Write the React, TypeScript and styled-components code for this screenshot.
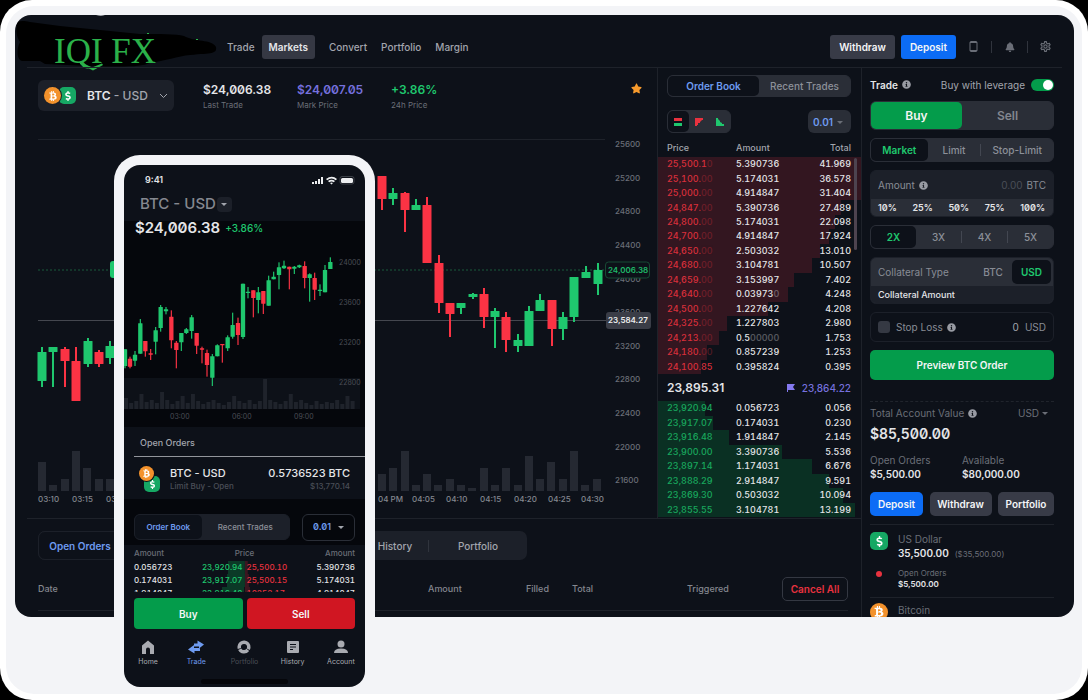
import React from "react";
import styled, { createGlobalStyle } from "styled-components";
import { FaBtc, FaInfoCircle, FaBell, FaStar, FaDollarSign } from "react-icons/fa";
import { MdOutlineSettings } from "react-icons/md";

const c = {
  screen: "#0d1119",
  deep: "#05070c",
  card: "#1c2029",
  raised: "#2a2e37",
  line: "#1e222a",
  text: "#e4e5e8",
  soft: "#a2a5ad",
  mute: "#6a6e77",
  dim: "#4a4e57",
  green: "#1fc76e",
  greenFill: "#049c4b",
  red: "#e8323f",
  candleRed: "#fb3344",
  blue: "#6e9bf0",
  blueFill: "#0c6cf5",
  purple: "#7570dd",
  tray: "#f3f4f7",
};

const Global = createGlobalStyle`
  *, *::before, *::after { box-sizing: border-box; }
  body {
    margin: 0;
    background: #000;
    color: ${c.text};
    font-family: Inter, "Liberation Sans", sans-serif;
    font-size: 10px;
    line-height: 14px;
  }
  button, input, select { font: inherit; color: inherit; margin: 0; }
  button { border: 0; padding: 0; background: none; cursor: pointer; }
  a { color: inherit; text-decoration: none; }
  svg { display: block; flex: none; }
  table { border-collapse: collapse; border-spacing: 0; width: 100%; }
  th, td { padding: 0; text-align: left; font-weight: 500; }
`;

/* ---------- frame ---------- */

const Frame = styled.div`
  height: 100vh;
  min-height: 640px;
  padding: 6px;
  background: #fff;
  border-radius: 32px;
`;

const Tray = styled.div`
  position: relative;
  display: flex;
  height: 100%;
  padding: 9px 8px 77px 9px;
  background: ${c.tray};
  border-radius: 28px;
`;

const Screen = styled.div`
  flex: 1;
  min-width: 0;
  display: flex;
  flex-direction: column;
  overflow: hidden;
  background: ${c.screen};
  border-radius: 16px;
`;

/* ---------- header ---------- */

const Header = styled.header`
  display: flex;
  align-items: center;
  height: 52px;
  padding: 0 23px 0 1px;
`;

const Rule = styled.div<{ $r?: number }>`
  flex: none;
  height: 1px;
  margin: 0 ${(p) => p.$r ?? 12}px 0 12px;
  background: ${c.line};
`;

const Nav = styled.nav`
  display: flex;
  margin: 11px auto 0 4px;
`;

const NavLink = styled.a<{ $on?: boolean }>`
  display: flex;
  align-items: center;
  height: 24px;
  margin-right: ${(p) => (p.$on ? 7 : 0)}px;
  padding: 0 7px;
  border-radius: 3px;
  font-weight: ${(p) => (p.$on ? 600 : 500)};
  color: ${(p) => (p.$on ? c.text : c.soft)};
  background: ${(p) => (p.$on ? "#353843" : "transparent")};
`;

const Actions = styled.div`
  display: flex;
  align-items: center;
  gap: 6px;
  margin-top: 11px;
`;

const Button = styled.button<{ $tone?: "blue" | "green" | "red"; $h?: number; $r?: number }>`
  height: ${(p) => p.$h ?? 24}px;
  padding: 0 9px;
  border-radius: ${(p) => p.$r ?? 3}px;
  font-weight: 600;
  color: #f4f5f6;
  background: ${(p) =>
    p.$tone === "blue" ? c.blueFill : p.$tone === "green" ? c.greenFill : p.$tone === "red" ? "#d01622" : "#383b47"};
`;

const Tools = styled.div`
  display: grid;
  grid-template-columns: 35px 1px 35px 1px 35px;
  align-items: center;
  margin: 0 -12px 0 -6px;
  color: ${c.mute};
`;

const Tool = styled.button`
  display: grid;
  place-items: center;
  height: 24px;
`;

const Tick = styled.span`
  width: 1px;
  height: 12px;
  background: #30343d;
`;

/* ---------- layout ---------- */

const Body = styled.div`
  flex: 1;
  min-height: 0;
  display: grid;
  grid-template-columns: minmax(0, 1fr) 213px;
`;

const Main = styled.main`
  min-width: 0;
`;

const Top = styled.div`
  display: grid;
  grid-template-columns: minmax(0, 1fr) 204px;
`;

const ChartPanel = styled.section`
  min-width: 0;
`;

const Ticker = styled.div`
  display: flex;
  align-items: flex-start;
  height: 58px;
  padding: 12px 15px 0 23px;
`;

const Pair = styled.button`
  display: flex;
  align-items: center;
  width: 136px;
  height: 31px;
  padding: 0 6px;
  border-radius: 6px;
  background: ${c.card};
  font-size: 12px;
  font-weight: 500;
  color: ${c.soft};
  > svg { margin-left: auto; }
`;

const Strong = styled.b`
  font-weight: 600;
  color: ${c.text};
`;

const CoinPair = styled.span`
  display: flex;
  flex-direction: row-reverse;
  margin-right: 11px;
`;

const Coin = styled.span<{ $kind: "btc" | "usd"; $size?: number }>`
  position: relative;
  display: grid;
  place-items: center;
  flex: none;
  width: ${(p) => p.$size ?? 17}px;
  height: ${(p) => p.$size ?? 17}px;
  border-radius: ${(p) => (p.$kind === "btc" ? "50%" : "5px")};
  background: ${(p) => (p.$kind === "btc" ? "#f3922c" : "#16a864")};
  color: #fff;
`;

const FrontCoin = styled(Coin)`
  margin-right: -2px;
  box-shadow: 0 0 0 1px ${c.card};
`;

const Stat = styled.div<{ $color?: string }>`
  width: 94px;
  padding-top: 2px;
  strong {
    display: block;
    line-height: 16px;
    font-size: 12px;
    font-weight: 600;
    font-feature-settings: "zero";
    color: ${(p) => p.$color ?? c.text};
  }
  small {
    display: block;
    font-size: 8px;
    line-height: 15px;
    color: ${c.mute};
  }
`;

const Stats = styled.div`
  display: flex;
  margin-left: 29px;
`;

const Star = styled.button`
  margin: 3px 0 0 auto;
  color: #f79a2c;
`;

const ChartSvg = styled.svg`
  width: 100%;
  height: auto;
  font-size: 8px;
  font-weight: 500;
`;

/* ---------- order book ---------- */

const Book = styled.section`
  display: flex;
  flex-direction: column;
  padding-top: 7px;
  border-left: 1px solid ${c.line};
`;

const Segment = styled.div<{ $h: number }>`
  display: flex;
  align-items: stretch;
  height: ${(p) => p.$h}px;
  border: 1px solid ${c.raised};
  border-radius: 6px;
  background: ${c.raised};
`;

const Seg = styled.button<{ $on?: boolean; $color?: string; $grow?: number; $size?: number }>`
  flex: ${(p) => p.$grow ?? 1} 1 0;
  display: grid;
  place-items: center;
  border-radius: 5px;
  font-size: ${(p) => p.$size ?? 10}px;
  font-weight: ${(p) => (p.$on ? 600 : 500)};
  color: ${(p) => (p.$on ? p.$color ?? c.blue : "#8c9099")};
  background: ${(p) => (p.$on ? c.screen : "transparent")};
`;

const SegTick = styled(Tick)`
  align-self: center;
  background: #434751;
`;

const BookPad = styled.div`
  padding: 0 10px 0 9px;
`;

const BookTools = styled.div`
  display: flex;
  justify-content: space-between;
  margin-top: 13px;
  > div:first-child { width: 64px; }
`;

const SelectBox = styled.span<{ $w: number; $h: number; $outline?: boolean; $plain?: boolean }>`
  position: relative;
  display: inline-flex;
  width: ${(p) => p.$w}px;
  height: ${(p) => p.$h}px;
  select {
    appearance: none;
    width: 100%;
    padding: 0 0 0 ${(p) => (p.$plain ? 0 : p.$outline ? 10 : 5)}px;
    border: ${(p) => (p.$outline ? `1px solid ${c.raised}` : "0")};
    border-radius: 6px;
    outline: 0;
    background: ${(p) => (p.$outline || p.$plain ? "transparent" : c.raised)};
    color: ${(p) => (p.$plain ? c.mute : c.blue)};
    font-size: ${(p) => (p.$outline ? 9 : 10)}px;
    font-weight: ${(p) => (p.$plain ? 400 : 600)};
    font-feature-settings: ${(p) => (p.$outline ? '"zero"' : "normal")};
  }
  svg {
    position: absolute;
    top: 50%;
    right: ${(p) => (p.$outline ? 11 : p.$plain ? 6 : 8)}px;
    margin-top: -1px;
    color: ${(p) => (p.$outline ? c.soft : c.mute)};
    pointer-events: none;
  }
`;

const BookTable = styled.table<{ $h: number; $side: "ask" | "bid" }>`
  position: relative;
  table-layout: fixed;
  height: ${(p) => p.$h}px;
  font-size: 9px;
  line-height: 10px;
  font-feature-settings: "tnum";
  td:first-child, th:first-child { padding-left: 9px; }
  td:last-child, th:last-child { padding-right: 10px; text-align: right; }
  td:first-child { color: ${(p) => (p.$side === "ask" ? "#d82f3b" : "#19a75d")}; }
  thead th {
    height: 24px;
    padding-top: 6px;
    color: ${c.soft};
  }
`;

const Faded = styled.span`
  opacity: 0.35;
`;

const BookSide = styled.div`
  position: relative;
`;

const DepthArea = styled.svg`
  position: absolute;
  left: 0;
  bottom: 0;
  width: 100%;
`;

const Thumb = styled.span`
  position: absolute;
  top: 25px;
  right: 4px;
  width: 3px;
  height: 92px;
  border-radius: 2px;
  background: #4d434f;
`;

const Spread = styled.div`
  display: flex;
  align-items: center;
  height: 27px;
  padding: 0 10px 0 9px;
  font-size: 12px;
  font-weight: 600;
  svg { margin: 0 7px 0 auto; }
  span { font-size: 10px; font-weight: 500; color: ${c.purple}; }
`;

/* ---------- orders ---------- */

const OrderTabs = styled.div`
  display: flex;
  align-items: center;
  width: 489px;
  max-width: calc(100% - 46px);
  height: 29px;
  margin: 12px 0 0 23px;
  border-radius: 7px;
  background: ${c.card};
`;

const OrderTab = styled.button<{ $on?: boolean; $w: number }>`
  width: ${(p) => p.$w}px;
  height: 29px;
  border: 1px solid ${(p) => (p.$on ? c.card : "transparent")};
  border-radius: 7px;
  font-weight: ${(p) => (p.$on ? 600 : 500)};
  color: ${(p) => (p.$on ? c.blue : c.soft)};
  background: ${(p) => (p.$on ? c.screen : "transparent")};
  &:nth-child(2) { margin-left: auto; }
`;

const OrdersTable = styled.table`
  table-layout: fixed;
  width: calc(100% - 36px);
  margin: 9px 13px 0 23px;
  border-bottom: 1px solid ${c.line};
  th {
    height: 41px;
    font-size: 9px;
    color: #84878f;
  }
  th:last-child { text-align: right; }
`;

const Cancel = styled.button`
  width: 66px;
  height: 24px;
  border: 1px solid #343842;
  border-radius: 5px;
  font-size: 10px;
  font-weight: 600;
  color: ${c.red};
`;

/* ---------- trade column ---------- */

const Side = styled.aside`
  min-height: 0;
  overflow: hidden;
  padding: 8px 20px 0 8px;
  border-left: 1px solid ${c.line};
`;

const Form = styled.form`
  display: grid;
  gap: 8px;
`;

const Line = styled.div<{ $h?: number }>`
  display: flex;
  align-items: center;
  height: ${(p) => p.$h ?? 17}px;
`;

const Info = styled(FaInfoCircle)`
  width: 9px;
  height: 9px;
  margin-left: 4px;
  color: #989ba3;
`;

const Toggle = styled.label`
  display: flex;
  align-items: center;
  gap: 6px;
  margin-left: auto;
  color: ${c.soft};
  input {
    appearance: none;
    position: relative;
    width: 23px;
    height: 12px;
    border-radius: 6px;
    background: ${c.greenFill};
  }
  input::after {
    content: "";
    position: absolute;
    top: 1px;
    right: 1px;
    width: 10px;
    height: 10px;
    border-radius: 50%;
    background: #fff;
  }
`;

const SideSeg = styled(Seg)`
  font-size: 12px;
  font-weight: 600;
  color: ${(p) => (p.$on ? "#f4f5f6" : "#82868f")};
  background: ${(p) => (p.$on ? c.greenFill : "transparent")};
`;

const Card = styled.div<{ $flip?: boolean }>`
  overflow: hidden;
  border: 1px solid ${c.card};
  border-radius: 6px;
  background: ${(p) => (p.$flip ? c.raised : c.card)};
`;

const CardRow = styled.div`
  display: flex;
  align-items: center;
  height: 28px;
  padding: 0 7px;
  color: #888c95;
  label { display: flex; align-items: center; }
`;

const CardFoot = styled.div<{ $bg: string }>`
  display: flex;
  align-items: center;
  justify-content: space-between;
  height: 17px;
  padding: 0 8px 0 7px;
  font-size: 9px;
  font-weight: 500;
  background: ${(p) => p.$bg};
  button { font-weight: 600; font-feature-settings: "zero"; }
`;

const Field = styled.input`
  flex: 1;
  min-width: 0;
  width: 20px;
  margin-right: 4px;
  padding: 0;
  border: 0;
  outline: 0;
  background: none;
  text-align: right;
  color: ${c.dim};
`;

const StopRow = styled.div`
  display: flex;
  align-items: center;
  height: 30px;
  padding: 0 7px;
  border: 1px solid ${c.card};
  border-radius: 6px;
  color: #888c95;
  label { display: flex; align-items: center; gap: 6px; }
  input[type="checkbox"] {
    appearance: none;
    width: 12px;
    height: 12px;
    border-radius: 3px;
    background: #353943;
  }
  input[type="text"] { color: ${c.soft}; margin-right: 6px; }
`;

const Ccy = styled.button<{ $on?: boolean }>`
  height: 24px;
  padding: 0 9px;
  border-radius: 5px;
  font-weight: ${(p) => (p.$on ? 600 : 500)};
  color: ${(p) => (p.$on ? c.green : "#888c95")};
  background: ${(p) => (p.$on ? c.screen : "transparent")};
`;

const CcyGroup = styled.div`
  display: flex;
  margin: 0 -5px 0 auto;
`;

const Account = styled.section`
  margin-top: 21px;
  padding-top: 3px;
  border-top: 1px dashed #20242c;
  color: ${c.mute};
`;

const Spacer = styled.span`
  flex: 1;
`;

const Balance = styled.div`
  height: 26px;
  font-size: 14px;
  line-height: 26px;
  font-weight: 600;
  color: ${c.text};
  font-feature-settings: "zero";
`;

const Pairs = styled.dl`
  display: grid;
  grid-template-columns: 1fr 1fr;
  margin: 6px 0 11px;
  dd { margin: 0; font-weight: 600; color: ${c.text}; }
`;

const Buttons = styled.div`
  display: grid;
  grid-template-columns: 53px 62px 56px;
  justify-content: space-between;
  margin-bottom: 8px;
  button { border-radius: 5px; padding: 0; }
`;

const Asset = styled.div<{ $tight?: boolean }>`
  display: grid;
  grid-template-columns: 28px 1fr;
  align-content: start;
  height: 73px;
  padding-top: ${(p) => (p.$tight ? 5 : 7)}px;
  border-top: 1px solid ${c.line};
  > div:nth-child(2) { height: 36px; }
  small { font-size: 8px; line-height: 11px; display: block; }
  small b { font-weight: 600; color: ${c.text}; }
  em { font-style: normal; font-size: 8px; margin-left: 3px; }
`;

const Dot = styled.span`
  width: 6px;
  height: 6px;
  margin: 3px 0 0 6px;
  border-radius: 50%;
  background: ${c.red};
`;

/* ---------- phone ---------- */

const Phone = styled.div`
  position: absolute;
  left: 108px;
  top: 149px;
  width: 261px;
  padding: 10px 10px 7px;
  border-radius: 26px;
  background: ${c.tray};
`;

const PhoneScreen = styled.div`
  overflow: hidden;
  height: 522px;
  display: flex;
  flex-direction: column;
  border-radius: 16px;
  background: ${c.screen};
`;

const Status = styled.div`
  display: flex;
  align-items: center;
  justify-content: space-between;
  height: 30px;
  padding: 0 10px 0 21px;
  font-size: 9px;
  font-weight: 600;
`;

const PhonePair = styled.button`
  display: flex;
  align-items: center;
  height: 18px;
  margin: 0 0 8px 16px;
  font-size: 15px;
  font-weight: 500;
  color: #858890;
  span {
    display: grid;
    place-items: center;
    width: 15px;
    height: 15px;
    margin-left: 1px;
    border-radius: 4px;
    background: ${c.card};
    color: ${c.soft};
  }
`;

const Dark = styled.div`
  background: ${c.deep};
`;

const PhonePrice = styled.div`
  display: flex;
  align-items: center;
  gap: 5px;
  height: 14px;
  padding-left: 11px;
  font-size: 15px;
  font-weight: 600;
  font-feature-settings: "zero";
  span { font-size: 10px; font-weight: 500; color: ${c.green}; }
`;

const PhoneHead = styled.h2`
  height: 30px;
  margin: 0 0 0 10px;
  padding-left: 6px;
  border-bottom: 1px solid #92959b;
  font-size: 9px;
  line-height: 31px;
  font-weight: 500;
  color: ${c.soft};
`;

const PhoneOrder = styled.div`
  display: grid;
  grid-template-columns: 31px 1fr auto;
  align-items: start;
  height: 42px;
  padding: 9px 15px 0;
  font-size: 11px;
  font-weight: 500;
  small { display: block; font-size: 8px; line-height: 13px; color: ${c.dim}; }
  > div:last-child { text-align: right; }
`;

const Stack = styled.span`
  display: grid;
  > :nth-child(1) { grid-area: 1 / 1; margin: 10px 0 0 5px; }
  > :nth-child(2) { grid-area: 1 / 1; box-shadow: 0 0 0 1px ${c.screen}; }
`;

const PhoneTabs = styled.div`
  display: flex;
  align-items: center;
  justify-content: space-between;
  height: 46px;
  padding: 10px 10px 0;
  > div { width: 156px; border-color: ${c.card}; background: ${c.card}; }
`;

const Clip = styled.div`
  height: 47px;
  overflow: hidden;
`;

const PhoneTable = styled.table`
  table-layout: fixed;
  width: calc(100% - 20px);
  margin: 0 10px;
  font-size: 8px;
  line-height: 13px;
  font-feature-settings: "tnum";
  th { height: 16px; color: ${c.mute}; }
  td:nth-child(2) { text-align: right; color: ${c.green}; }
  td:nth-child(3) { color: ${c.red}; }
  td:last-child, th:last-child { text-align: right; }
  th:nth-child(2) { text-align: center; }
`;

const Depth = styled.span<{ $side: "ask" | "bid" }>`
  display: block;
  padding: 0 2px;
  background-image: linear-gradient(${(p) => (p.$side === "bid" ? "#0b3a27, #0b3a27" : "#3c1620, #3c1620")});
  background-repeat: no-repeat;
  background-position: ${(p) => (p.$side === "bid" ? "right" : "left")};
  background-size: var(--depth) 100%;
`;

const PhoneActions = styled.div`
  display: grid;
  grid-template-columns: 1fr 1fr;
  gap: 4px;
  padding: 6px 10px 8px;
`;

const TabBar = styled.nav`
  display: grid;
  grid-template-columns: repeat(5, 1fr);
  padding: 3px 0 0;
`;

const TabItem = styled.a<{ $color?: string }>`
  display: grid;
  justify-items: center;
  gap: 1px;
  font-size: 7px;
  line-height: 13px;
  color: ${(p) => p.$color ?? "#a9abb1"};
`;

const HomeBar = styled.div`
  flex: none;
  width: 87px;
  height: 5px;
  margin: auto auto 3px;
  border-radius: 3px;
  background: #05060a;
`;

/* ---------- data ---------- */

type Candle = [x: number, top: number, bottom: number, high: number, low: number, up: 0 | 1];

const mainCandles: Candle[] = [
  [42, 352, 381, 347, 387, 1], [53, 347, 352, 347, 387, 1], [65, 349, 361, 347, 387, 0],
  [76, 361, 401, 347, 401, 0], [88, 341, 364, 338, 367, 1], [99, 352, 364, 350, 367, 0],
  [110, 346, 358, 341, 364, 1],
  [382, 176, 199, 176, 210, 0], [393, 193, 199, 188, 205, 1], [405, 193, 210, 192, 232, 0],
  [416, 205, 210, 199, 210, 1], [427, 205, 263, 197, 263, 0], [439, 263, 303, 255, 313, 0],
  [450, 303, 314, 303, 337, 0], [461, 303, 308, 303, 314, 1], [473, 294, 297, 293, 299, 1],
  [484, 294, 317, 288, 328, 0], [495, 311, 317, 308, 348, 1], [506, 317, 340, 312, 352, 0],
  [518, 340, 346, 334, 352, 1], [529, 311, 346, 306, 346, 1], [540, 300, 311, 294, 311, 1],
  [552, 300, 329, 300, 346, 0], [563, 317, 329, 312, 340, 1], [574, 277, 317, 277, 322, 1],
  [586, 272, 278, 266, 278, 1], [598, 270, 284, 263, 295, 1],
];

const volumes: [number, number][] = [
  [38, 29], [49, 6], [61, 12], [72, 40], [83, 23], [95, 12], [106, 12],
  [378, 17], [389, 23], [401, 40], [412, 6], [423, 17], [434, 6], [446, 12], [457, 6], [468, 3], [480, 23],
  [491, 6], [502, 23], [514, 6], [525, 35], [536, 12], [547, 29], [559, 12], [570, 40], [581, 6], [593, 12],
];

const prices: [string, number][] = [
  ["25600", 144], ["25200", 178], ["24800", 211], ["24400", 245], ["24000", 279], ["23600", 312],
  ["23200", 346], ["22800", 379], ["22400", 413], ["22000", 447], ["21600", 480],
];

const times: [string, number][] = [
  ["03:10", 38], ["03:15", 72], ["03:20", 106], ["04 PM", 378], ["04:05", 412], ["04:10", 446],
  ["04:15", 480], ["04:20", 514], ["04:25", 548], ["04:30", 581],
];

/* Phone candles are stored on a grid three times finer than the drawing. */
const phoneCandles: Candle[] = [
  [60, 598, 648, 598, 655, 1], [75, 626, 650, 620, 655, 0], [90, 614, 632, 603, 648, 1], [106, 520, 611, 507, 611, 1],
  [121, 573, 604, 573, 620, 0], [137, 610, 614, 597, 630, 0], [152, 541, 575, 531, 613, 1], [167, 471, 534, 465, 545, 1],
  [183, 478, 484, 471, 493, 1], [199, 500, 571, 481, 595, 0], [214, 578, 600, 573, 655, 0], [229, 549, 577, 549, 603, 1],
  [244, 538, 549, 534, 552, 1], [260, 502, 543, 495, 566, 1], [275, 549, 587, 549, 612, 0], [291, 595, 599, 590, 640, 0],
  [306, 609, 645, 599, 680, 0], [322, 619, 683, 612, 708, 1], [337, 586, 619, 583, 619, 1], [352, 582, 586, 582, 638, 0],
  [368, 562, 595, 556, 603, 1], [383, 525, 560, 488, 566, 1], [399, 519, 555, 503, 585, 0], [414, 401, 561, 401, 567, 1],
  [429, 425, 429, 411, 445, 1], [445, 421, 444, 421, 502, 0], [460, 427, 450, 411, 490, 1], [475, 423, 461, 423, 492, 0],
  [491, 391, 467, 377, 467, 1], [506, 380, 388, 365, 388, 1], [522, 352, 375, 337, 418, 1], [537, 347, 355, 332, 357, 1],
  [553, 350, 358, 350, 418, 0], [568, 350, 356, 348, 372, 1], [583, 346, 352, 344, 354, 1], [599, 348, 384, 334, 415, 0],
  [614, 373, 384, 370, 455, 1], [629, 384, 419, 368, 450, 0], [645, 419, 423, 403, 438, 1], [660, 360, 427, 345, 427, 1],
  [676, 336, 357, 322, 357, 1],
];

const phoneVolumes = [
  11, 6, 8, 15, 7, 9, 6, 17, 9, 5, 8, 13, 6, 15, 8, 5, 7, 9, 6, 4, 7, 13, 8, 6, 9, 5, 8, 30, 9, 7, 5, 8, 15, 7, 9, 6, 4, 8,
  5, 7, 6, 9, 5, 13, 8,
];

type Row = [price: string, faded: string, amount: string, fadedAmount: string, total: string, depth: number];

const asks: Row[] = [
  ["25,500.1", "0", "5.390736", "", "41.969", 100], ["25,100.", "00", "5.174031", "", "36.578", 100],
  ["25,000.", "00", "4.914847", "", "31.404", 100], ["24,847.", "00", "5.390736", "", "27.489", 90],
  ["24,800.", "00", "5.174031", "", "22.098", 87], ["24,700.", "00", "4.914847", "", "17.924", 84],
  ["24,650.", "00", "2.503032", "", "13.010", 80], ["24,680.", "00", "3.104781", "", "10.507", 76],
  ["24,659.", "00", "3.153997", "", "7.402", 67], ["24,640.", "00", "0.03973", "0", "4.248", 64],
  ["24,500.", "00", "1.227642", "", "4.208", 54], ["24,325.", "00", "1.227803", "", "2.980", 34],
  ["24,213.", "00", "0.5", "00000", "1.753", 30], ["24,180.", "00", "0.857239", "", "1.253", 24],
  ["24,100.85", "", "0.395824", "", "0.395", 21],
];

const bids: Row[] = [
  ["23,920.94", "", "0.056723", "", "0.056", 23], ["23,917.07", "", "0.174031", "", "0.230", 27],
  ["23,916.48", "", "1.914847", "", "2.145", 35], ["23,900.00", "", "3.390736", "", "5.536", 61],
  ["23,897.14", "", "1.174031", "", "6.676", 76], ["23,888.29", "", "2.914847", "", "9.591", 84],
  ["23,869.30", "", "0.503032", "", "10.094", 91], ["23,855.55", "", "3.104781", "", "13.199", 97],
];

/* ---------- pieces ---------- */

const Caret = () => (
  <svg width="6" height="3" viewBox="0 0 8 4"><path d="M0 0h8L4 4z" fill="currentColor" /></svg>
);

const Candles = ({ data, w, wick }: { data: Candle[]; w: number; wick: number }) => (
  <>
    {data.map(([x, t, b, h, l, up]) => (
      <g key={x} fill={up ? c.green : c.candleRed}>
        <rect x={x - wick / 2} y={h} width={wick} height={l - h} />
        <rect x={x - w / 2} y={t} width={w} height={b - t} rx={wick / 4} />
      </g>
    ))}
  </>
);

const MainChart = () => (
  <ChartSvg viewBox="15 126 642 392" role="img" aria-label="Price chart">
    <path d="M38 139.500H605" stroke={c.line} />
    {prices.map(([t, y]) => <text key={t} x="615" y={y + 3} fill="#6a6e77">{t}</text>)}
    {times.map(([t, x]) => <text key={t} x={x} y="502" fill="#84878f">{t}</text>)}
    {volumes.map(([x, h]) => <rect key={x} x={x} y={491 - h} width="8" height={h} fill="#252932" />)}
    <path d="M38 270H605" stroke="#1a5a3c" strokeDasharray="2 2" />
    <path d="M38 320.500H606" stroke="#44474f" />
    <rect x="110" y="261" width="30" height="17" rx="3" fill={c.green} />
    <Candles data={mainCandles} w={9} wick={2} />
    <rect x="605.500" y="262" width="44" height="16" rx="3" fill={c.screen} stroke="#174a34" />
    <text x="608" y="273" fill="#1fb868" fontWeight="600">24,006.38</text>
    <rect x="606" y="312" width="45" height="17" rx="3" fill="#3a3d47" />
    <text x="608" y="323" fill="#eceded" fontWeight="600">23,584.27</text>
  </ChartSvg>
);

const PhoneChart = () => (
  <svg width="241" height="192" viewBox="124 235 241 192" fontSize="7" role="img" aria-label="Price chart">
    <rect x="124" y="378" width="236" height="31" fill="#0d1118" />
    {phoneVolumes.map((h, i) => <rect key={i} x={124 + i * 5.15} y={409 - h} width="4" height={h} fill="#1f232b" />)}
    <g transform="translate(105 150) scale(.33333)"><Candles data={phoneCandles} w={13} wick={3.500} /></g>
    <g fill="#4a4d55">
      <text x="339" y="265">24000</text><text x="339" y="305">23600</text>
      <text x="339" y="345">23200</text><text x="339" y="385">22800</text>
      <text x="170" y="419">03:00</text><text x="232" y="419">06:00</text><text x="294" y="419">09:00</text>
    </g>
  </svg>
);

const Logo = () => (
  <svg width="200" height="52" viewBox="16 15 200 52" overflow="visible" role="img" aria-label="IQI FX">
    <path
      d="M17 24C17 21 22 20 30 22L60 26 100 30 140 34C160 34 176 34 184 36 194 42 212 39 216 47 217 54 212 53 190 55 178 56 165 61 150 63 140 67 125 67 90 66L45 64 40 61H22C17 60 16 50 20 42 16 36 16 30 17 24Z"
      fill="#000"
    />
    <path d="M96 15h9q-4 1.500-9 0z" fill="#d5d8dc" />
    <g fill="#2bb14a">
      <text x="54" y="63" fontSize="35" fontFamily='"Liberation Serif", serif'>IQI FX</text>
      <path d="M80 61.500L92 67.500 93 70.500 80 64zM92 67.500L102 63.500 103 65 93 70.500z" />
      <rect x="147" y="33" width="2" height="1" /><rect x="196" y="39" width="2" height="1" />
    </g>
  </svg>
);

/* Stepped area behind a side of the book: one step for each level. */
const DepthSteps = ({ rows, h, fill }: { rows: Row[]; h: number; fill: string }) => (
  <DepthArea height={h} viewBox={`0 0 100 ${rows.length}`} preserveAspectRatio="none" shapeRendering="crispEdges" aria-hidden>
    <path d={`M0 0${rows.map((r, i) => `H${r[5]}V${i + 1}`).join("")}H0z`} fill={fill} />
  </DepthArea>
);

const Levels = ({ rows }: { rows: Row[] }) => (
  <tbody>
    {rows.map(([p, f, a, fa, t]) => (
      <tr key={p}>
        <td>{p}<Faded>{f}</Faded></td>
        <td>{a}<Faded>{fa}</Faded></td>
        <td>{t}</td>
      </tr>
    ))}
  </tbody>
);

const BookCols = () => (<colgroup><col width="78" /><col width="62" /><col /></colgroup>);

const OrderBook = () => (
  <Book>
    <BookPad>
      <Segment $h={22}>
        <Seg $on>Order Book</Seg>
        <Seg>Recent Trades</Seg>
      </Segment>
      <BookTools>
        <Segment $h={23}>
          <Seg $on aria-label="Both sides">
            <svg width="8" height="8"><rect width="8" height="3" fill={c.red} /><rect y="5" width="8" height="3" fill={c.green} /></svg>
          </Seg>
          <Seg aria-label="Asks"><svg width="8" height="8"><path d="M0 0h8v2H7L5 4v1H3v2H2v1H0z" fill={c.red} /></svg></Seg>
          <Seg aria-label="Bids"><svg width="8" height="8"><path d="M0 0h2v1L4 3v1l2 1v1h2v2H0z" fill={c.green} /></svg></Seg>
        </Segment>
        <SelectBox $w={43} $h={23}>
          <select aria-label="Price step"><option>0.01</option></select>
          <Caret />
        </SelectBox>
      </BookTools>
    </BookPad>
    <BookSide>
      <DepthSteps rows={asks} h={217} fill="#331620" />
      <BookTable $h={241} $side="ask">
        <BookCols />
        <thead><tr><th>Price</th><th>Amount</th><th>Total</th></tr></thead>
        <Levels rows={asks} />
      </BookTable>
      <Thumb />
    </BookSide>
    <Spread>
      23,895.31
      <svg width="8" height="8"><path d="M0 0h8L6 3l2 3H1v2H0z" fill="#8479f0" /></svg>
      <span>23,864.22</span>
    </Spread>
    <BookSide>
      <DepthSteps rows={bids} h={116} fill="#0a3023" />
      <BookTable $h={116} $side="bid">
        <BookCols />
        <Levels rows={bids} />
      </BookTable>
    </BookSide>
  </Book>
);

const TradeColumn = () => (
  <Side>
    <Form onSubmit={(e) => e.preventDefault()}>
      <Line>
        <Strong>Trade</Strong><Info />
        <Toggle>Buy with leverage<input type="checkbox" defaultChecked /></Toggle>
      </Line>
      <Segment $h={29}>
        <SideSeg type="button" $on>Buy</SideSeg>
        <SideSeg type="button">Sell</SideSeg>
      </Segment>
      <Segment $h={24}>
        <Seg type="button" $on $color={c.green} $grow={57}>Market</Seg>
        <Seg type="button" $grow={53}>Limit</Seg>
        <SegTick />
        <Seg type="button" $grow={72}>Stop-Limit</Seg>
      </Segment>
      <Card>
        <CardRow>
          <label htmlFor="amount">Amount<Info /></label>
          <Field id="amount" type="text" defaultValue="0.00" />BTC
        </CardRow>
        <CardFoot $bg={c.raised}>
          {["10%", "25%", "50%", "75%", "100%"].map((p) => <button type="button" key={p}>{p}</button>)}
        </CardFoot>
      </Card>
      <Segment $h={24}>
        <Seg type="button" $on $color={c.green}>2X</Seg>
        <Seg type="button">3X</Seg>
        <SegTick />
        <Seg type="button">4X</Seg>
        <SegTick />
        <Seg type="button">5X</Seg>
      </Segment>
      <Card $flip>
        <CardRow>
          Collateral Type
          <CcyGroup>
            <Ccy type="button">BTC</Ccy>
            <Ccy type="button" $on>USD</Ccy>
          </CcyGroup>
        </CardRow>
        <CardFoot $bg={c.card}>Collateral Amount</CardFoot>
      </Card>
      <StopRow>
        <label><input type="checkbox" />Stop Loss</label><Info />
        <Field type="text" aria-label="Stop loss amount" defaultValue="0" />USD
      </StopRow>
      <Button $tone="green" $h={30} $r={5}>Preview BTC Order</Button>
    </Form>
    <Account>
      <Line $h={16}>
        Total Account Value<Info />
        <Spacer />
        <SelectBox $w={36} $h={16} $plain>
          <select aria-label="Currency"><option>USD</option></select>
          <Caret />
        </SelectBox>
      </Line>
      <Balance>$85,500.00</Balance>
      <Pairs>
        <dt>Open Orders</dt><dt>Available</dt>
        <dd>$5,500.00</dd><dd>$80,000.00</dd>
      </Pairs>
      <Buttons>
        <Button $tone="blue">Deposit</Button>
        <Button>Withdraw</Button>
        <Button>Portfolio</Button>
      </Buttons>
      <Asset>
        <Coin $kind="usd" $size={18}><FaDollarSign size={11} /></Coin>
        <div>US Dollar<br /><Strong>35,500.00</Strong> <em>($35,500.00)</em></div>
        <Dot />
        <div><small>Open Orders</small><small><b>$5,500.00</b></small></div>
      </Asset>
      <Asset $tight>
        <Coin $kind="btc" $size={18}><FaBtc size={12} /></Coin>
        <div>Bitcoin</div>
      </Asset>
    </Account>
  </Side>
);

const PhoneView = () => (
  <Phone>
    <PhoneScreen>
      <Status>
        9:41
        <svg width="43" height="9" viewBox="0 0 43 9" fill="#eceef0">
          <path d="M0 6h2v2H0zM3 5h2v3H3zM6 3h2v5H6zM9 1h2v7H9z" />
          <path d="M14 3q6-4.500 11 0l-1.200 1.200q-4.300-3.200-8.600 0zM16 5q3.500-2.600 7 0l-1.200 1.200q-2.300-1.600-4.600 0zM18 7q1.500-1 3 0L19.500 8.500z" />
          <rect x="29" y="2" width="12" height="5" rx="1.500" />
          <rect x="28" y=".5" width="14" height="7.500" rx="2" fill="none" stroke="#50545c" strokeWidth=".7" />
        </svg>
      </Status>
      <PhonePair>BTC - USD<span><Caret /></span></PhonePair>
      <Dark>
        <PhonePrice>$24,006.38<span>+3.86%</span></PhonePrice>
        <PhoneChart />
      </Dark>
      <PhoneHead>Open Orders</PhoneHead>
      <PhoneOrder>
        <Stack>
          <Coin $kind="usd" $size={16}><FaDollarSign size={9} /></Coin>
          <Coin $kind="btc" $size={15}><FaBtc size={9} /></Coin>
        </Stack>
        <div>BTC - USD<small>Limit Buy - Open</small></div>
        <div>0.5736523 BTC<small>$13,770.14</small></div>
      </PhoneOrder>
      <Dark>
        <PhoneTabs>
          <Segment $h={26}>
            <Seg $on $grow={67} $size={8}>Order Book</Seg>
            <Seg $grow={88} $size={8}>Recent Trades</Seg>
          </Segment>
          <SelectBox $w={53} $h={27} $outline>
            <select aria-label="Price step"><option>0.01</option></select>
            <Caret />
          </SelectBox>
        </PhoneTabs>
      </Dark>
      <Clip>
        <PhoneTable>
          <thead><tr><th>Amount</th><th colSpan={2}>Price</th><th>Amount</th></tr></thead>
          <tbody>
            {[
              ["0.056723", "23,920.94", "25,500.10", "5.390736", "30%"],
              ["0.174031", "23,917.07", "25,500.15", "5.174031", "32%"],
              ["1.914847", "23,916.48", "10252.17", "4.914847", "40%"],
            ].map(([a, b, s, t, d], i) => (
              <tr key={a}>
                <td>{a}</td>
                <td><Depth $side="bid" style={{ "--depth": d } as React.CSSProperties}>{b}</Depth></td>
                <td><Depth $side="ask" style={{ "--depth": `${5 + i * 2}%` } as React.CSSProperties}>{s}</Depth></td>
                <td>{t}</td>
              </tr>
            ))}
          </tbody>
        </PhoneTable>
      </Clip>
      <PhoneActions>
        <Button $tone="green" $h={31} $r={4}>Buy</Button>
        <Button $tone="red" $h={31} $r={4}>Sell</Button>
      </PhoneActions>
      <TabBar>
        <TabItem href="#home">
          <svg width="14" height="14" viewBox="0 0 14 14" fill="currentColor"><path d="M7 .5L13 5.500V14H9V9.500a2 2 0 0 0-4 0V14H1V5.500z" /></svg>
          Home
        </TabItem>
        <TabItem href="#trade" $color={c.blue}>
          <svg width="16" height="14" viewBox="0 0 16 14" fill="currentColor"><path d="M9.500 .5L16 4.500 11 8.500V6.500H6V3.500h3.500zM6 5L0 9.500 6.500 13.500V11H12V8H6z" /></svg>
          Trade
        </TabItem>
        <TabItem href="#portfolio" $color={c.dim}>
          <svg width="14" height="14" viewBox="0 0 14 14" fill="none" stroke="#a9abb1" strokeWidth="3.500">
            <circle cx="7" cy="7" r="4.800" strokeDasharray="9.300 .75" transform="rotate(-85 7 7)" />
          </svg>
          Portfolio
        </TabItem>
        <TabItem href="#history">
          <svg width="12" height="14" viewBox="0 0 12 14"><rect y="1" width="12" height="12" rx="1" fill="currentColor" /><path d="M3 4.500h6M3 7h6M3 9.500h3" stroke={c.screen} /></svg>
          History
        </TabItem>
        <TabItem href="#account">
          <svg width="14" height="14" viewBox="0 0 14 14" fill="currentColor"><circle cx="7" cy="4" r="3.500" /><path d="M0 13Q0 8.500 7 8.500T14 13z" /></svg>
          Account
        </TabItem>
      </TabBar>
      <HomeBar />
    </PhoneScreen>
  </Phone>
);

export default function App() {
  return (
    <>
      <Global />
      <Frame>
        <Tray>
          <Screen>
            <Header>
              <Logo />
              <Nav>
                <NavLink href="#trade">Trade</NavLink>
                <NavLink href="#markets" $on>Markets</NavLink>
                <NavLink href="#convert">Convert</NavLink>
                <NavLink href="#portfolio">Portfolio</NavLink>
                <NavLink href="#margin">Margin</NavLink>
              </Nav>
              <Actions>
                <Button>Withdraw</Button>
                <Button $tone="blue">Deposit</Button>
                <Tools>
                  <Tool aria-label="Mobile app">
                    <svg width="9" height="11" fill="none" stroke="currentColor"><rect x="1" y=".5" width="7" height="10" rx="1" /><path d="M1 1.500h7M1 9.500h7" /></svg>
                  </Tool>
                  <Tick />
                  <Tool aria-label="Notifications"><FaBell size={10} /></Tool>
                  <Tick />
                  <Tool aria-label="Settings"><MdOutlineSettings size={13} /></Tool>
                </Tools>
              </Actions>
            </Header>
            <Rule />
            <Body>
              <Main>
                <Top>
                  <ChartPanel>
                    <Ticker>
                      <Pair>
                        <CoinPair>
                          <Coin $kind="usd"><FaDollarSign size={10} /></Coin>
                          <FrontCoin $kind="btc"><FaBtc size={10} /></FrontCoin>
                        </CoinPair>
                        <span><Strong>BTC</Strong> - USD</span>
                        <svg width="9" height="6" fill="none" stroke="currentColor"><path d="M1 1l3.500 3.500L8 1" /></svg>
                      </Pair>
                      <Stats>
                        <Stat><strong>$24,006.38</strong><small>Last Trade</small></Stat>
                        <Stat $color={c.purple}><strong>$24,007.05</strong><small>Mark Price</small></Stat>
                        <Stat $color={c.green}><strong>+3.86%</strong><small>24h Price</small></Stat>
                      </Stats>
                      <Star aria-label="Favourite"><FaStar size={11} /></Star>
                    </Ticker>
                    <MainChart />
                  </ChartPanel>
                  <OrderBook />
                </Top>
                <Rule $r={0} />
                <OrderTabs>
                  <OrderTab $on $w={84}>Open Orders</OrderTab>
                  <OrderTab $w={66}>History</OrderTab>
                  <Tick />
                  <OrderTab $w={98}>Portfolio</OrderTab>
                </OrderTabs>
                <OrdersTable>
                  <colgroup>
                    <col width="390" /><col width="98" /><col width="46" />
                    <col width="115" /><col width="80" /><col />
                  </colgroup>
                  <thead>
                    <tr>
                      <th>Date</th><th>Amount</th><th>Filled</th><th>Total</th><th>Triggered</th>
                      <th><Cancel>Cancel All</Cancel></th>
                    </tr>
                  </thead>
                </OrdersTable>
              </Main>
              <TradeColumn />
            </Body>
          </Screen>
          <PhoneView />
        </Tray>
      </Frame>
    </>
  );
}
